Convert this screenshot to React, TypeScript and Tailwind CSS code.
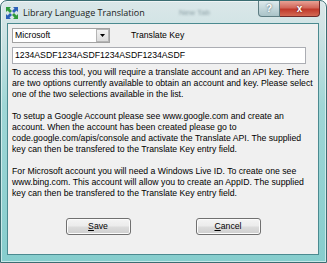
const intro = [
  "To access this tool, you will require a translate account and an API key. There",
  "are two options currently available to obtain an account and key. Please select",
  "one of the two selections available in the list.",
];

const google = [
  "To setup a Google Account please see www.google.com and create an",
  "account. When the account has been created please go to",
  "code.google.com/apis/console and activate the Translate API. The supplied",
  "key can then be transfered to the Translate Key entry field.",
];

const microsoft = [
  "For Microsoft account you will need a Windows Live ID. To create one see",
  "www.bing.com. This account will allow you to create an AppID. The supplied",
  "key can then be transfered to the Translate Key entry field.",
];

function Lines({ lines, className }: { lines: string[]; className: string }) {
  return (
    <div className={className}>
      {lines.map((l) => (
        <div key={l} className="whitespace-nowrap h-[11px] leading-[11px]">
          {l}
        </div>
      ))}
    </div>
  );
}

function AppIcon() {
  return (
    <svg width="14" height="14" viewBox="0 0 14 14">
      <path d="M1 1 L6 1 L4.5 2.5 L7 5 L5 7 L2.5 4.5 L1 6 Z" fill="#2f9a3a" />
      <path d="M13 13 L8 13 L9.5 11.5 L7 9 L9 7 L11.5 9.5 L13 8 Z" fill="#2f9a3a" />
      <path d="M13 1 L13 6 L11.5 4.5 L9 7 L7 5 L9.5 2.5 L8 1 Z" fill="#2a5fb8" />
      <path d="M1 13 L1 8 L2.5 9.5 L5 7 L7 9 L4.5 11.5 L6 13 Z" fill="#2a5fb8" />
    </svg>
  );
}

function WinButton({ label, first, rest }: { label: string; first: string; rest: string }) {
  return (
    <button
      aria-label={label}
      className="w-[65px] h-[17px] rounded-[3px] border border-[#707070] bg-[linear-gradient(to_bottom,#f4f4f4_0%,#ebebeb_48%,#dcdcdc_52%,#cfcfcf_100%)] shadow-[inset_0_0_0_1px_#fcfcfc] text-[8.7px] leading-none text-black flex items-center justify-center"
    >
      <span className="underline underline-offset-[1px]">{first}</span>
      {rest}
    </button>
  );
}

export default function App() {
  return (
    <div className="w-[327px] h-[263px] flex flex-col overflow-hidden rounded-t-[7px] border border-[#3b6d72] bg-[linear-gradient(to_bottom,#dbe7e9_0%,#cfe3e4_12%,#9fd6d6_40%,#86cdcd_100%)] shadow-[inset_0_0_0_1px_rgba(255,255,255,0.55)] font-['Liberation_Sans',Arial,sans-serif]">
      {/* Title bar */}
      <div className="relative h-[22px] shrink-0 flex items-start">
        <div className="pl-[4px] pt-[5px]">
          <AppIcon />
        </div>
        <span className="ml-[4px] mt-[5px] text-[9px] leading-[14px] text-[#1a1a1a] font-['Open_Sans',sans-serif]">
          Library Language Translation
        </span>
        <span className="absolute left-[178px] top-[6px] text-[8px] text-[#8a9ea4] blur-[1px]">New Tab</span>
        <div className="ml-auto mr-[6px] flex">
          <div className="w-[22px] h-[16px] rounded-bl-[4px] border border-t-0 border-[#5d7c82] bg-[linear-gradient(to_bottom,#dfeaec_0%,#c3d6da_50%,#a9c3c8_100%)] flex items-center justify-center text-[10px] font-bold text-white [text-shadow:0_0_2px_#40575c]">
            ?
          </div>
          <div className="w-[40px] h-[16px] rounded-br-[4px] border border-t-0 border-l-0 border-[#6e2a2a] bg-[linear-gradient(to_bottom,#e8a195_0%,#d2675a_45%,#c0392b_55%,#d36a55_100%)] flex items-center justify-center text-[10px] font-bold text-white [text-shadow:0_0_2px_#5a1010]">
            x
          </div>
        </div>
      </div>

      {/* Client area */}
      <div className="flex-1 ml-[6px] mr-[7px] mb-[7px] border border-[#4b8a90] bg-[#f0f0f0] pl-[4px] pt-[4px] text-[8.7px] text-black">
        <div className="flex items-center">
          <div className="w-[98px] h-[15px] flex items-center border border-[#a2a2a2] bg-white">
            <span className="flex-1 pl-[2px] leading-none">Microsoft</span>
            <div className="w-[13px] h-[13px] border border-[#b5b5b5] bg-[linear-gradient(to_bottom,#f3f3f3,#dcdcdc)] flex items-center justify-center">
              <svg width="5" height="3" viewBox="0 0 5 3">
                <path d="M0 0 H5 L2.5 3 Z" fill="#000" />
              </svg>
            </div>
          </div>
          <span className="ml-[21px] leading-none">Translate Key</span>
        </div>

        <div className="mt-[4px] w-[294px] h-[17px] flex items-center border border-[#abadb3] bg-white pl-[2px]">
          1234ASDF1234ASDF1234ASDF1234ASDF
        </div>

        <Lines lines={intro} className="mt-[2.5px]" />
        <Lines lines={google} className="mt-[11px]" />
        <Lines lines={microsoft} className="mt-[11px]" />

        <div className="mt-[19.5px] flex justify-center gap-[65px] pr-[4px]">
          <WinButton label="Save" first="S" rest="ave" />
          <WinButton label="Cancel" first="C" rest="ancel" />
        </div>
      </div>
    </div>
  );
}
